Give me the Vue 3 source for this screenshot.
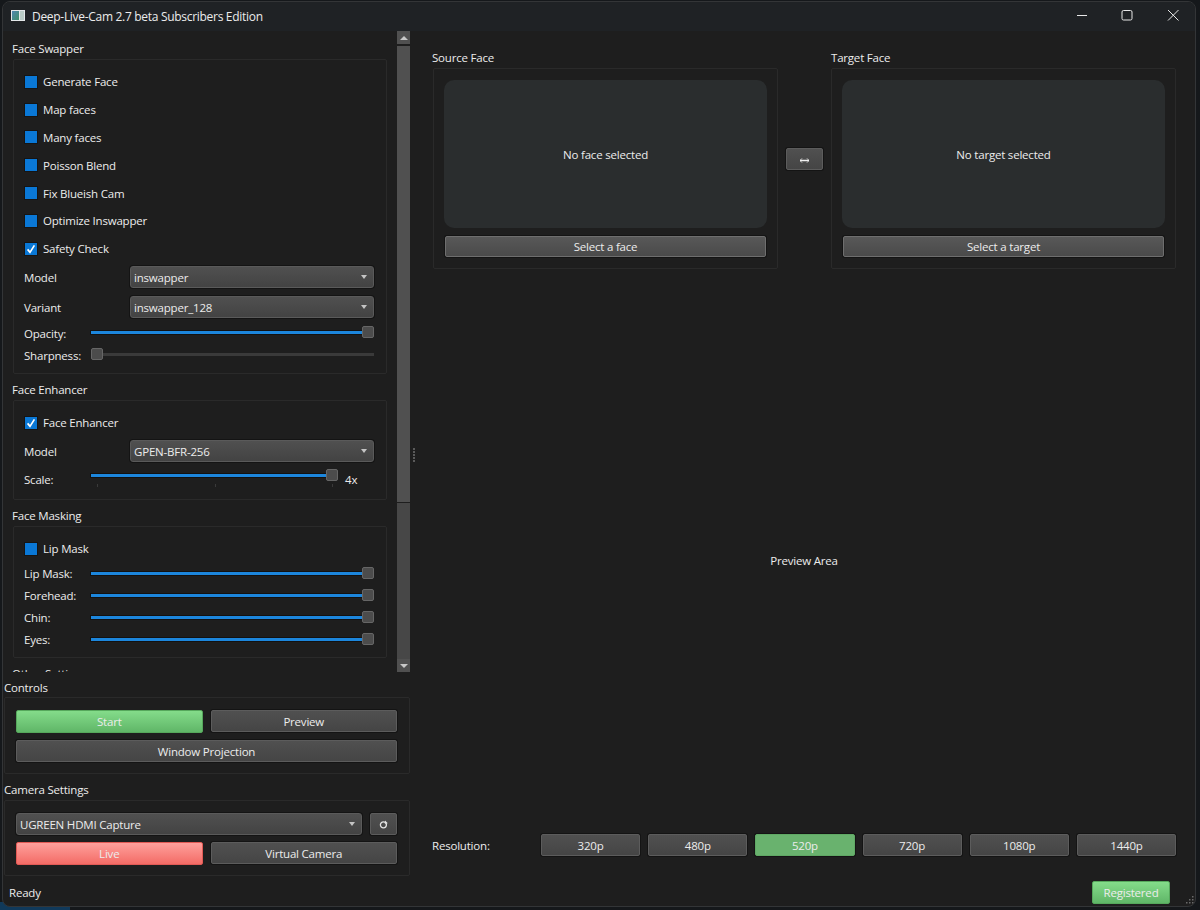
<script setup>
const swapChecks = [
  { label: 'Generate Face', on: false },
  { label: 'Map faces', on: false },
  { label: 'Many faces', on: false },
  { label: 'Poisson Blend', on: false },
  { label: 'Fix Blueish Cam', on: false },
  { label: 'Optimize Inswapper', on: false },
  { label: 'Safety Check', on: true }
]
const maskSliders = ['Lip Mask:', 'Forehead:', 'Chin:', 'Eyes:']
const resolutions = ['320p', '480p', '520p', '720p', '1080p', '1440p']
</script>

<template>
  <div class="desk">
    <div class="window">
      <header class="titlebar">
        <svg class="appicon" width="14" height="11" viewBox="0 0 14 11">
          <defs>
            <linearGradient id="pic" x1="0" y1="0" x2="1" y2="1">
              <stop offset="0" stop-color="#4f86b0" />
              <stop offset="1" stop-color="#3f8f6a" />
            </linearGradient>
          </defs>
          <rect width="14" height="11" fill="#e4e8ea" />
          <rect x="1" y="1" width="7" height="9" fill="url(#pic)" />
          <rect x="9" y="1" width="4" height="9" fill="#b9cbc6" />
        </svg>
        <span class="apptitle">Deep-Live-Cam 2.7 beta Subscribers Edition</span>
        <div class="winbtns">
          <svg width="12" height="12" viewBox="0 0 12 12"><path d="M1 6.5h10" stroke="#e8e8e8" fill="none" /></svg>
          <svg width="12" height="12" viewBox="0 0 12 12"><rect x="1" y="1.5" width="10" height="9.5" rx="1.5" stroke="#e8e8e8" fill="none" /></svg>
          <svg width="12" height="12" viewBox="0 0 12 12"><path d="M1 1l10.5 10.5M11.5 1L1 11.5" stroke="#e8e8e8" fill="none" /></svg>
        </div>
      </header>

      <div class="body">
        <aside class="left">
          <div class="scrollwrap">
            <div class="scrollcontent">
              <section class="sect">
                <div class="title">Face Swapper</div>
                <div class="box swapbox">
                  <label v-for="c in swapChecks" :key="c.label" class="check">
                    <span class="cb">
                      <svg v-if="c.on" width="12" height="12" viewBox="0 0 12 12"><path d="M2.6 6.4l2.4 3 4.4-7" stroke="#fff" stroke-width="1.7" fill="none" /></svg>
                    </span>
                    {{ c.label }}
                  </label>
                  <div class="formrow first"><span class="flabel">Model</span><div class="combo"><span>inswapper</span><i class="arrow"></i></div></div>
                  <div class="formrow"><span class="flabel">Variant</span><div class="combo"><span>inswapper_128</span><i class="arrow"></i></div></div>
                  <div class="slrow first"><span class="sllabel">Opacity:</span><div class="slider"><div class="fill"></div><div class="handle"></div></div></div>
                  <div class="slrow"><span class="sllabel">Sharpness:</span><div class="slider empty"><div class="groove"></div><div class="handle start"></div></div></div>
                </div>
              </section>

              <section class="sect">
                <div class="title">Face Enhancer</div>
                <div class="box enhbox">
                  <label class="check">
                    <span class="cb"><svg width="12" height="12" viewBox="0 0 12 12"><path d="M2.6 6.4l2.4 3 4.4-7" stroke="#fff" stroke-width="1.7" fill="none" /></svg></span>
                    Face Enhancer
                  </label>
                  <div class="formrow first"><span class="flabel">Model</span><div class="combo"><span>GPEN-BFR-256</span><i class="arrow"></i></div></div>
                  <div class="slrow scale">
                    <span class="sllabel">Scale:</span>
                    <div class="slider"><div class="fill"></div><div class="handle"></div>
                      <i class="tick t1"></i><i class="tick t2"></i><i class="tick t3"></i>
                    </div>
                    <span class="scaleval">4x</span>
                  </div>
                </div>
              </section>

              <section class="sect">
                <div class="title">Face Masking</div>
                <div class="box maskbox">
                  <label class="check"><span class="cb"></span>Lip Mask</label>
                  <div v-for="s in maskSliders" :key="s" class="slrow mask">
                    <span class="sllabel">{{ s }}</span>
                    <div class="slider"><div class="fill"></div><div class="handle"></div></div>
                  </div>
                </div>
              </section>

              <section class="sect">
                <div class="title other">Other Settings</div>
              </section>
            </div>

            <div class="scrollbar">
              <div class="sbbtn"><i class="sbup"></i></div>
              <div class="sbhandle"></div>
              <div class="sbtrack"></div>
              <div class="sbbtn"><i class="sbdown"></i></div>
            </div>
          </div>

          <section class="lowsect">
            <div class="title ctl">Controls</div>
            <div class="box lowbox">
              <div class="btnrow">
                <button class="btn green big">Start</button>
                <button class="btn">Preview</button>
              </div>
              <button class="btn wide">Window Projection</button>
            </div>
          </section>

          <section class="lowsect">
            <div class="title">Camera Settings</div>
            <div class="box lowbox cam">
              <div class="camrow">
                <div class="combo"><span>UGREEN HDMI Capture</span><i class="arrow"></i></div>
                <button class="btn refresh">
                  <svg width="9" height="9" viewBox="0 0 9 9"><circle cx="4.4" cy="4.8" r="3" stroke="#e4e4e4" stroke-width="1.3" fill="none" /><path d="M6 .6l2.8 2.6-3 .6z" fill="#e4e4e4" /></svg>
                </button>
              </div>
              <div class="btnrow">
                <button class="btn red big">Live</button>
                <button class="btn">Virtual Camera</button>
              </div>
            </div>
          </section>
        </aside>

        <div class="splitter"><i v-for="n in 5" :key="n"></i></div>

        <main class="main">
          <div class="faces">
            <section class="face">
              <div class="title">Source Face</div>
              <div class="box facebox">
                <div class="preview">No face selected</div>
                <button class="btn select">Select a face</button>
              </div>
            </section>
            <button class="btn swap">
              <svg width="9" height="5" viewBox="0 0 9 5"><path d="M0 2.5h9" stroke="#f0f0f0" stroke-width="1.3" fill="none" /><path d="M2 .4L0 2.5l2 2.1M7 .4l2 2.1-2 2.1" stroke="#f0f0f0" stroke-width=".8" fill="none" /></svg>
            </button>
            <section class="face target">
              <div class="title">Target Face</div>
              <div class="box facebox">
                <div class="preview">No target selected</div>
                <button class="btn select">Select a target</button>
              </div>
            </section>
          </div>
          <div class="previewarea">Preview Area</div>
          <div class="resrow">
            <span class="reslabel">Resolution:</span>
            <div class="resbtns">
              <button v-for="r in resolutions" :key="r" class="btn" :class="{ active: r === '520p' }">{{ r }}</button>
            </div>
          </div>
        </main>
      </div>

      <footer class="status">
        <span>Ready</span>
        <button class="btn green registered">Registered</button>
        <svg class="grip" width="10" height="10" viewBox="0 0 10 10" fill="#6a6a6a">
          <rect x="7" y="1" width="1.5" height="1.5" />
          <rect x="4" y="4" width="1.5" height="1.5" /><rect x="7" y="4" width="1.5" height="1.5" />
          <rect x="1" y="7" width="1.5" height="1.5" /><rect x="4" y="7" width="1.5" height="1.5" /><rect x="7" y="7" width="1.5" height="1.5" />
        </svg>
      </footer>
    </div>
  </div>
</template>

<style>
html, body { margin: 0; background: #15181b; }
</style>

<style scoped>
.desk {
  width: 1200px;
  height: 910px;
  box-sizing: border-box;
  padding: 1px 4px 3px 2px;
  overflow: hidden;
  background: linear-gradient(#10395a, #10395a) 0 100% / 70px 8px no-repeat, #15181b;
  font-family: "Open Sans", "Noto Sans", sans-serif;
  font-size: 11.5px;
  letter-spacing: -0.2px;
  color: #ececec;
}
.window {
  height: 906px;
  box-sizing: border-box;
  border: 1px solid #333537;
  border-radius: 8px;
  overflow: hidden;
  background: #1e1e1e;
  display: flex;
  flex-direction: column;
}
.titlebar {
  height: 29px;
  flex: none;
  background: #1f2225;
  display: flex;
  align-items: center;
  padding-left: 8px;
}
.appicon { margin-top: -2px; }
.apptitle { margin-left: 7px; font-size: 12px; letter-spacing: -0.3px; }
.winbtns {
  margin-left: auto;
  padding-right: 16px;
  display: flex;
  gap: 33px;
  flex: none;
  margin-top: -3px;
}
.winbtns svg { display: block; }
.winbtns svg:last-child { margin-left: 1px; }
.body { flex: 1; display: flex; min-height: 0; }
.left { width: 408px; flex: none; display: flex; flex-direction: column; }
.scrollwrap { height: 641px; flex: none; display: flex; overflow: hidden; }
.scrollcontent { width: 394px; flex: none; padding: 10px 0 0 9px; box-sizing: border-box; overflow: hidden; }
.title { height: 16px; line-height: 16px; margin-bottom: 2px; white-space: nowrap; }
.title.ctl { margin-bottom: 1px; }
.sect { margin-bottom: 8px; }
.box {
  border: 1px solid #2a2a2a;
  border-radius: 2px;
  box-sizing: border-box;
}
.sect .box { margin-left: 1px; width: 374px; padding: 8px 12px 0 10px; }
.swapbox { height: 315px; }
.enhbox { height: 100px; }
.maskbox { height: 132px; }
.check { height: 27.8px; display: flex; align-items: center; gap: 6px; padding-left: 1px; }
.cb {
  width: 12px;
  height: 12px;
  background: #0a78d6;
  flex: none;
  box-shadow: 0 0 0 1px #151515;
  display: block;
}
.cb svg { display: block; }
.formrow { display: flex; align-items: center; height: 22px; margin-top: 8px; }
.formrow.first { margin-top: 3.4px; }
.flabel { width: 106px; flex: none; padding-top: 1px; }
.combo {
  flex: 1;
  height: 22px;
  box-sizing: border-box;
  border: 1px solid #5a5a5a;
  border-radius: 3px;
  background: linear-gradient(#505050, #434343);
  box-shadow: 0 0 0 1px #141414;
  display: flex;
  align-items: center;
  padding: 0 6px 0 3px;
}
.combo span { padding-top: 1px; }
.camrow .combo span { padding-top: 0; }
.arrow {
  margin-left: auto;
  width: 0;
  height: 0;
  border-left: 3.5px solid transparent;
  border-right: 3.5px solid transparent;
  border-top: 4px solid #c4c4c4;
}
.slrow { display: flex; align-items: center; height: 16px; margin-top: 6px; }
.sllabel { width: 67px; flex: none; white-space: nowrap; padding-top: 3px; }
.slider { position: relative; flex: 1; height: 12px; }
.fill {
  position: absolute;
  left: 0;
  right: 12px;
  top: 5px;
  height: 3px;
  background: #1c86dc;
  box-shadow: 0 0 0 1px #121212;
}
.groove {
  position: absolute;
  left: 12px;
  right: 0;
  top: 5px;
  height: 3px;
  background: #3a3a3a;
}
.handle {
  position: absolute;
  right: 0;
  top: 0;
  width: 12px;
  height: 12px;
  box-sizing: border-box;
  background: #4c4c4c;
  border: 1px solid #666;
  border-radius: 2px;
}
.handle.start { left: 0; right: auto; }
.scale { margin-top: 5px; }
.scale .sllabel { padding-top: 9px; }
.scale .slider { flex: none; width: 247px; }
.scaleval { margin-left: 7px; padding-top: 9px; }
.tick { position: absolute; top: 15px; width: 1px; height: 3px; background: #3a3a3a; }
.t1 { left: 6px; }
.t2 { left: 124px; }
.t3 { left: 241px; }
.mask { margin-top: 6px; }
.mask .sllabel { padding-top: 1px; }
.check + .mask { margin-top: 2px; }
.other { margin-top: 3px; }
.scrollbar { width: 13px; flex: none; display: flex; flex-direction: column; }
.sbbtn {
  height: 13px;
  flex: none;
  background: #505050;
  display: flex;
  align-items: center;
  justify-content: center;
}
.sbup { border-left: 4px solid transparent; border-right: 4px solid transparent; border-bottom: 4px solid #c8c8c8; }
.sbdown { border-left: 4px solid transparent; border-right: 4px solid transparent; border-top: 4px solid #c8c8c8; }
.sbhandle { height: 456px; flex: none; margin-top: 2px; background: #505050; }
.sbtrack { flex: 1; background: #474747; margin-top: 1px; }
.lowsect { margin-left: 1px; margin-top: 8px; }
.lowbox { width: 406px; height: 77px; padding: 12px 12px 0 11px; }
.lowbox.cam { height: 76px; }
.btn {
  font: inherit;
  letter-spacing: inherit;
  color: #ececec;
  box-sizing: border-box;
  height: 22px;
  border: 1px solid #5c5c5c;
  border-radius: 2px;
  background: linear-gradient(#505050, #454545);
  box-shadow: 0 0 0 1px #141414;
  padding: 0;
  display: block;
}
.btnrow { display: flex; gap: 8px; }
.btnrow .btn { flex: 1; }
.btn.big { height: 23px; margin: -.5px 0; }
.green { background: linear-gradient(#84dc8a, #60b668); border-color: #56a85c; box-shadow: none; }
.red { background: linear-gradient(#ffa09c, #f36c66); border-color: #e25a55; box-shadow: none; }
.wide { width: 100%; margin-top: 8px; }
.camrow { display: flex; gap: 8px; margin-bottom: 7px; }
.refresh { width: 27px; flex: none; display: flex; align-items: center; justify-content: center; }
.splitter { width: 5px; flex: none; display: flex; flex-direction: column; align-items: center; justify-content: center; gap: 1px; }
.splitter i { width: 2px; height: 2px; background: #5a5a5a; display: block; }
.main { flex: 1; min-width: 0; display: flex; flex-direction: column; padding: 19px 19px 22px 16px; }
.faces { display: flex; align-items: flex-start; }
.face { width: 346px; flex: none; }
.face .title { margin-bottom: 2px; }
.target .title { margin-left: 1px; }
.facebox { margin-left: 1px; height: 201px; padding: 11px 10px; }
.preview {
  height: 148px;
  border-radius: 10px;
  background: #2a2d2e;
  display: flex;
  align-items: center;
  justify-content: center;
}
.select { width: calc(100% - 2px); margin: 8px 1px 0; height: 21px; background: linear-gradient(#585858, #4a4a4a); border-color: #6e6e6e; }
.swap { width: 37px; height: 22px; flex: none; margin: 98px 7px 0 8px; display: flex; align-items: center; justify-content: center; padding-top: 2px; }
.previewarea { flex: 1; display: flex; justify-content: center; align-items: center; padding-top: 18px; }
.resrow { display: flex; align-items: center; height: 22px; }
.reslabel { width: 109px; flex: none; padding-top: 1px; }
.resbtns { flex: 1; display: flex; gap: 8px; }
.resbtns .btn { flex: 1; height: 22px; }
.resbtns .active { background: #69b26e; border-color: #5fa864; }
.status { height: 28px; flex: none; display: flex; align-items: center; padding-left: 6px; position: relative; }
.registered { margin-left: auto; margin-right: 25px; width: 78px; height: 23px; }
.grip { position: absolute; right: 0; bottom: 1px; }
</style>
